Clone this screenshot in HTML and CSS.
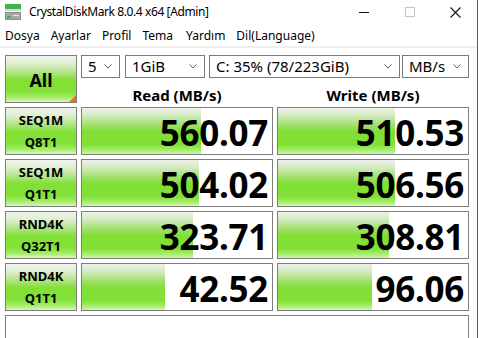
FILE: index.html
```html
<!DOCTYPE html>
<html>
<head>
<meta charset="utf-8">
<link rel="stylesheet" href="styles.css">
</head>
<body>
<div class="window">
  <div class="titlebar">
    <svg class="appicon" width="16" height="16" viewBox="0 0 16 16">
      <rect x="0" y="0" width="16" height="5" fill="#3db54a"/>
      <rect x="0" y="5" width="16" height="2" fill="#d8d8d8"/>
      <rect x="0" y="8" width="16" height="8" fill="#8c8c8c"/>
      <rect x="1" y="9" width="14" height="6" fill="#a8a8a8"/>
      <rect x="2" y="12" width="4" height="2" fill="#3db54a"/>
      <rect x="8" y="11" width="6" height="1" fill="#e6e6e6"/>
    </svg>
    <span class="title">CrystalDiskMark 8.0.4 x64 [Admin]</span>
    <div class="controls">
      <div class="ctl"><svg width="10" height="10" viewBox="0 0 10 10"><rect x="0" y="5" width="10" height="1" fill="#111"/></svg></div>
      <div class="ctl"><svg width="10" height="10" viewBox="0 0 10 10"><rect x="0.5" y="0.5" width="9" height="9" fill="none" stroke="#c4c4c4"/></svg></div>
      <div class="ctl"><svg width="11" height="11" viewBox="0 0 11 11"><path d="M0.5 0.5 L10.5 10.5 M10.5 0.5 L0.5 10.5" stroke="#111" stroke-width="1.1"/></svg></div>
    </div>
  </div>
  <div class="menubar">
    <span class="mi m1">Dosya</span>
    <span class="mi m2">Ayarlar</span>
    <span class="mi m3">Profil</span>
    <span class="mi m4">Tema</span>
    <span class="mi m5">Yardım</span>
    <span class="mi m6">Dil(Language)</span>
  </div>
  <div class="content">
    <div class="grid">
      <div class="btn all">All<span class="corner"></span></div>
      <div class="top">
        <div class="selects">
          <div class="sel s1"><span>5</span><svg class="chev" width="8" height="5" viewBox="0 0 8 5"><path d="M0.5 0.5 L4 4 L7.5 0.5" fill="none" stroke="#606060"/></svg></div>
          <div class="sel s2"><span>1GiB</span><svg class="chev" width="8" height="5" viewBox="0 0 8 5"><path d="M0.5 0.5 L4 4 L7.5 0.5" fill="none" stroke="#606060"/></svg></div>
          <div class="sel s3"><span>C: 35% (78/223GiB)</span><svg class="chev" width="8" height="5" viewBox="0 0 8 5"><path d="M0.5 0.5 L4 4 L7.5 0.5" fill="none" stroke="#606060"/></svg></div>
          <div class="sel s4"><span>MB/s</span><svg class="chev" width="8" height="5" viewBox="0 0 8 5"><path d="M0.5 0.5 L4 4 L7.5 0.5" fill="none" stroke="#606060"/></svg></div>
        </div>
        <div class="headers">
          <div class="hd">Read (MB/s)</div>
          <div class="hd">Write (MB/s)</div>
        </div>
      </div>

      <div class="btn label"><span>SEQ1M</span><span>Q8T1</span></div>
      <div class="meter"><div class="fill" style="width:62.47%"></div><span class="val">560.07</span></div>
      <div class="meter"><div class="fill" style="width:61.80%"></div><span class="val">510.53</span></div>

      <div class="btn label"><span>SEQ1M</span><span>Q1T1</span></div>
      <div class="meter"><div class="fill" style="width:61.71%"></div><span class="val">504.02</span></div>
      <div class="meter"><div class="fill" style="width:61.74%"></div><span class="val">506.56</span></div>

      <div class="btn label"><span>RND4K</span><span>Q32T1</span></div>
      <div class="meter"><div class="fill" style="width:58.50%"></div><span class="val">323.71</span></div>
      <div class="meter"><div class="fill" style="width:58.16%"></div><span class="val">308.81</span></div>

      <div class="btn label"><span>RND4K</span><span>Q1T1</span></div>
      <div class="meter"><div class="fill" style="width:43.81%"></div><span class="val">42.52</span></div>
      <div class="meter"><div class="fill" style="width:49.71%"></div><span class="val">96.06</span></div>

      <div class="comment"></div>
    </div>
  </div>
</div>
</body>
</html>
```

FILE: styles.css
```css
html, body {
  margin: 0;
  padding: 0;
  background: #ffffff;
  overflow: hidden;
}
body {
  width: 478px;
  height: 338px;
  font-family: "Noto Sans", "Open Sans", sans-serif;
  color: #000;
}
.window {
  width: 477px;
  height: 338px;
  border-right: 1px solid #5a5a5a;
  background: #fff;
  display: flex;
  flex-direction: column;
  overflow: hidden;
}
.titlebar {
  flex: none;
  height: 24px;
  display: flex;
  align-items: center;
  padding-left: 5px;
}
.appicon {
  flex: none;
  margin-top: -1px;
}
.title {
  font-size: 12px;
  letter-spacing: -0.4px;
  margin-left: 8px;
  margin-top: -1px;
  white-space: nowrap;
}
.controls {
  margin-left: auto;
  display: flex;
  align-items: center;
  height: 24px;
}
.ctl {
  width: 46px;
  height: 22px;
  display: flex;
  align-items: center;
  justify-content: center;
}
.ctl:last-child {
  width: 44px;
}
.menubar {
  flex: none;
  height: 22px;
  display: flex;
  align-items: center;
  font-size: 12px;
  white-space: nowrap;
  border-bottom: 2px solid #f0f0f0;
}
.mi { display: block; }
.m1 { margin-left: 5px; }
.m2 { margin-left: 11px; }
.m3 { margin-left: 11px; }
.m4 { margin-left: 11px; }
.m5 { margin-left: 13px; }
.m6 { margin-left: 11px; }
.content {
  flex: none;
  padding: 7px 0 0 5px;
}
.grid {
  display: grid;
  grid-template-columns: 72px 192px 192px;
  grid-template-rows: 48px 48px 48px 48px 48px 40px;
  column-gap: 4px;
  row-gap: 4px;
}
.btn {
  box-sizing: border-box;
  border: 1px solid #7d7d7d;
  background: linear-gradient(#f2f4f0 0%, #dcefcb 18%, #a9e37a 38%, #82e034 52%, #84e238 78%, #a6ec6c 90%, #d4f8b6 100%);
  position: relative;
}
.all {
  display: flex;
  align-items: center;
  justify-content: center;
  font-weight: 700;
  font-size: 18px;
  padding-top: 2px;
}
.corner {
  position: absolute;
  right: 0;
  bottom: 0;
  width: 0;
  height: 0;
  border-left: 7px solid transparent;
  border-bottom: 7px solid #f2720c;
}
.label {
  display: flex;
  flex-direction: column;
  align-items: center;
  justify-content: center;
  font-weight: 700;
  font-size: 13px;
  line-height: 22px;
}
.top {
  grid-column: 2 / 4;
  display: flex;
  flex-direction: column;
}
.selects {
  display: flex;
  height: 23px;
}
.sel {
  box-sizing: border-box;
  height: 23px;
  border: 1px solid #7a7a7a;
  background: #fff;
  display: flex;
  align-items: center;
  padding: 0 7px 0 6px;
  font-size: 15px;
  white-space: nowrap;
}
.sel span { flex: 1; margin-top: -1px; }
.chev { flex: none; }
.s1 { width: 39px; }
.s2 { width: 80px; margin-left: 5px; }
.s3 { width: 191px; margin-left: 4px; }
.s4 { width: 67px; margin-left: 2px; }
.headers {
  flex: 1;
  display: grid;
  grid-template-columns: 192px 192px;
  column-gap: 4px;
}
.hd {
  display: flex;
  align-items: center;
  justify-content: center;
  padding-top: 7px;
  font-weight: 700;
  font-size: 15px;
}
.meter {
  box-sizing: border-box;
  border: 1px solid #7d7d7d;
  background: #fff;
  position: relative;
  display: flex;
  align-items: center;
  justify-content: flex-end;
  overflow: hidden;
}
.fill {
  position: absolute;
  left: 0;
  top: 0;
  bottom: 0;
  background: linear-gradient(#eef1ec 0%, #d6ecc4 15%, #a3e070 36%, #80df34 52%, #82e036 80%, #a8ee70 92%, #cff7b0 100%);
}
.val {
  position: relative;
  font-weight: 700;
  font-size: 35px;
  line-height: 40px;
  padding-right: 4px;
  padding-top: 3px;
  letter-spacing: -0.3px;
}
.comment {
  grid-column: 1 / 4;
  box-sizing: border-box;
  border: 1px solid #7d7d7d;
  border-bottom: none;
  background: #fff;
}
```
